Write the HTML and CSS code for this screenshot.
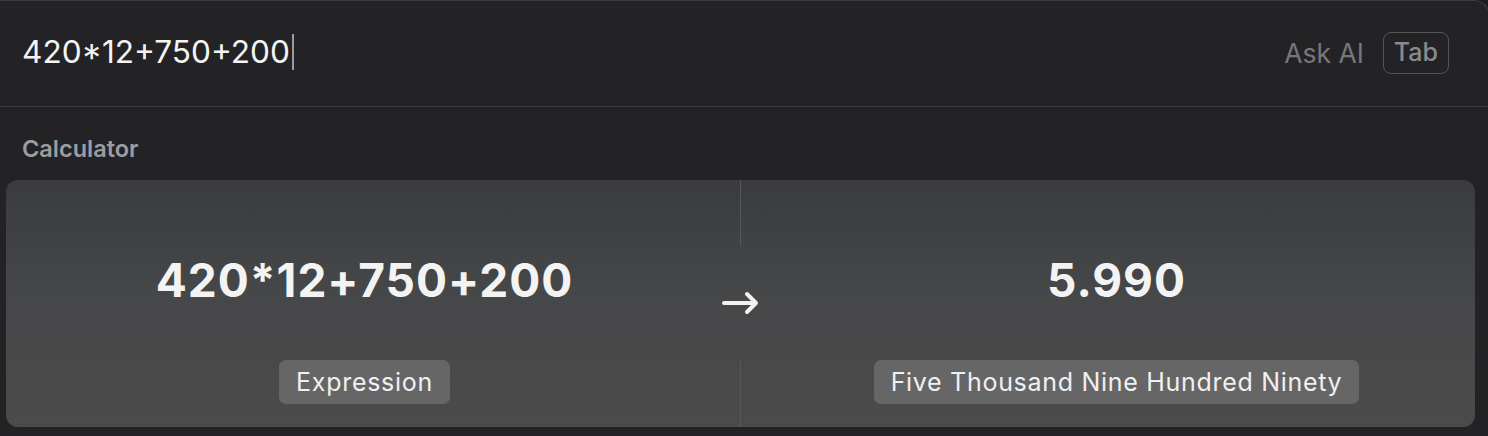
FILE: index.html
```html
<!DOCTYPE html>
<html lang="en">
<head>
  <meta charset="UTF-8">
  <meta name="viewport" content="width=device-width, initial-scale=1.0">
  <title>Calculator</title>
  <link rel="stylesheet" href="styles.css">
</head>
<body>
  <div class="window">
    <header class="search-bar">
      <div class="query">420*12+750+200<span class="caret"></span></div>
      <div class="actions">
        <span class="ask-ai">Ask AI</span>
        <kbd class="key">Tab</kbd>
      </div>
    </header>
    <main>
      <h2 class="section-title">Calculator</h2>
      <div class="calc-card">
        <div class="calc-side">
          <div class="calc-value">420*12+750+200</div>
          <div class="calc-label">Expression</div>
        </div>
        <div class="calc-middle">
          <div class="divider"></div>
          <svg class="arrow" width="40" height="26" viewBox="0 0 40 26">
            <path d="M3 13 H35 M26 4 L35 13 L26 22" fill="none" stroke="#f2f2f2" stroke-width="4" stroke-linecap="round" stroke-linejoin="round"/>
          </svg>
          <div class="divider"></div>
        </div>
        <div class="calc-side">
          <div class="calc-value">5.990</div>
          <div class="calc-label">Five Thousand Nine Hundred Ninety</div>
        </div>
      </div>
    </main>
  </div>
</body>
</html>
```

FILE: styles.css
```css
html, body {
  margin: 0;
  height: 100%;
  overflow: hidden;
}

body {
  background: #1b1b1d;
  font-family: Inter, "Noto Sans", sans-serif;
}

.window {
  width: calc(100% + 2px);
  height: 100%;
  box-sizing: border-box;
  background: #232326;
  border-top-right-radius: 16px;
  border-top: 1px solid #3c3c40;
  border-right: 1px solid #3c3c40;
}

.search-bar {
  height: 105px;
  display: flex;
  align-items: center;
  justify-content: space-between;
  padding: 0 40px 0 22px;
  border-bottom: 1px solid #3a3a3d;
}

.query {
  color: #f4f4f4;
  font-size: 31.6px;
  display: flex;
  align-items: center;
  margin-top: -4px;
}

.caret {
  width: 2px;
  height: 36px;
  background: #9a9a9e;
  margin-left: 2px;
}

.actions {
  display: flex;
  align-items: center;
  gap: 19px;
  margin-top: -2px;
}

.ask-ai {
  color: #77777b;
  font-size: 26.5px;
}

.key {
  font-family: Inter, "Noto Sans", sans-serif;
  color: #8a8a8e;
  font-size: 25px;
  font-weight: 500;
  border: 1.5px solid #56565a;
  border-radius: 8px;
  padding: 5px 10px 6px;
  line-height: 29px;
}

.section-title {
  margin: 0;
  padding: 28px 22px 17px;
  color: #9d9da1;
  font-size: 23.5px;
  font-weight: 600;
  line-height: 28px;
}

.calc-card {
  margin: 0 14px 0 6px;
  height: 247px;
  border-radius: 12px;
  background: linear-gradient(180deg, #3a3b3d 0%, #464749 45%, #4b4b4b 100%);
  display: grid;
  grid-template-columns: 1fr 35px 1fr;
}

.calc-side {
  display: flex;
  flex-direction: column;
  align-items: center;
  padding-top: 68px;
}

.calc-value {
  color: #f3f3f3;
  font-size: 46px;
  font-weight: 700;
  letter-spacing: 1px;
  line-height: 64px;
}

.calc-label {
  margin-top: 48px;
  background: #666667;
  color: #f0f0f0;
  font-size: 25px;
  letter-spacing: 0.7px;
  line-height: 44px;
  padding: 0 17px;
  border-radius: 7px;
}

.calc-middle {
  display: flex;
  flex-direction: column;
  align-items: center;
}

.divider {
  width: 1px;
  flex: 1;
  background: #56575a;
}

.arrow {
  flex: none;
  margin: 44px 0 46px;
}
```
